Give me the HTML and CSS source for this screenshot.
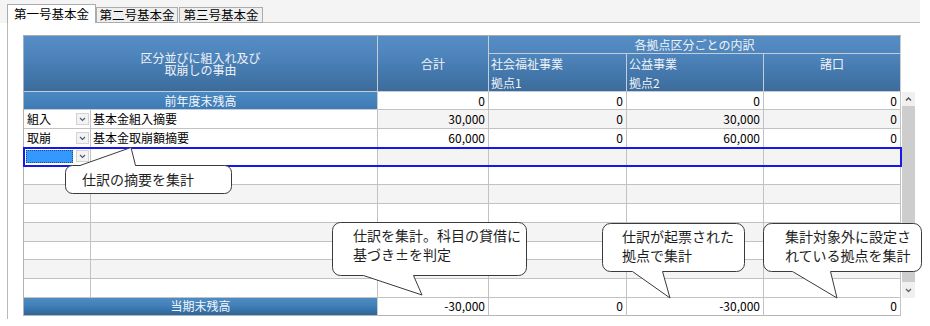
FILE: index.html
```html
<!DOCTYPE html>
<html lang="ja">
<head>
<meta charset="utf-8">
<title>基本金</title>
<link rel="stylesheet" href="styles.css">
</head>
<body>
<div class="app">
  <div class="tabs">
    <div class="tab tab-active">第一号基本金</div>
    <div class="tab tab-2">第二号基本金</div>
    <div class="tab tab-3">第三号基本金</div>
    <div class="tab-fill"></div>
  </div>
  <div class="panel">
    <div class="head">
      <div class="hc h-reason"><span class="hl">区分並びに組入れ及び</span><span class="hl">取崩しの事由</span></div>
      <div class="hc h-total">合計</div>
      <div class="hc h-group">各拠点区分ごとの内訳</div>
      <div class="hc h-sub">社会福祉事業<br>拠点1</div>
      <div class="hc h-sub">公益事業<br>拠点2</div>
      <div class="hc h-sub h-mid">諸口</div>
    </div>
    <div class="body">
      <div class="rows">
        <div class="row row-open">
          <div class="c band band-open">前年度末残高</div>
          <div class="c num">0</div>
          <div class="c num">0</div>
          <div class="c num">0</div>
          <div class="c num">0</div>
        </div>
        <div class="row alt">
          <div class="c lab w">組入<span class="dd"><svg width="11" height="10" viewBox="0 0 11 10"><polyline points="3,4 5.5,6.5 8,4" fill="none" stroke="#4c5c74" stroke-width="1.2"/></svg></span></div>
          <div class="c txt w">基本金組入摘要</div>
          <div class="c num">30,000</div>
          <div class="c num">0</div>
          <div class="c num">30,000</div>
          <div class="c num">0</div>
        </div>
        <div class="row">
          <div class="c lab">取崩<span class="dd"><svg width="11" height="10" viewBox="0 0 11 10"><polyline points="3,4 5.5,6.5 8,4" fill="none" stroke="#4c5c74" stroke-width="1.2"/></svg></span></div>
          <div class="c txt">基本金取崩額摘要</div>
          <div class="c num">60,000</div>
          <div class="c num">0</div>
          <div class="c num">60,000</div>
          <div class="c num">0</div>
        </div>
        <div class="row alt sel">
          <div class="c lab w"><span class="pick"></span><span class="dd"><svg width="11" height="10" viewBox="0 0 11 10"><polyline points="3,4 5.5,6.5 8,4" fill="none" stroke="#4c5c74" stroke-width="1.2"/></svg></span></div>
          <div class="c txt w"></div>
          <div class="c num"></div>
          <div class="c num"></div>
          <div class="c num"></div>
          <div class="c num"></div>
        </div>
        <div class="row"><div class="c"></div><div class="c"></div><div class="c"></div><div class="c"></div><div class="c"></div><div class="c"></div></div>
        <div class="row alt"><div class="c"></div><div class="c"></div><div class="c"></div><div class="c"></div><div class="c"></div><div class="c"></div></div>
        <div class="row"><div class="c"></div><div class="c"></div><div class="c"></div><div class="c"></div><div class="c"></div><div class="c"></div></div>
        <div class="row alt"><div class="c"></div><div class="c"></div><div class="c"></div><div class="c"></div><div class="c"></div><div class="c"></div></div>
        <div class="row"><div class="c"></div><div class="c"></div><div class="c"></div><div class="c"></div><div class="c"></div><div class="c"></div></div>
        <div class="row alt"><div class="c"></div><div class="c"></div><div class="c"></div><div class="c"></div><div class="c"></div><div class="c"></div></div>
        <div class="row"><div class="c"></div><div class="c"></div><div class="c"></div><div class="c"></div><div class="c"></div><div class="c"></div></div>
      </div>
      <div class="scroll">
        <div class="sb-btn"><svg width="13" height="14" viewBox="0 0 13 14"><polyline points="4,8.5 6.5,6 9,8.5" fill="none" stroke="#505050" stroke-width="1.3"/></svg></div>
        <div class="sb-thumb"></div>
        <div class="sb-btn sb-down"><svg width="13" height="16" viewBox="0 0 13 16"><polyline points="4,7 6.5,9.5 9,7" fill="none" stroke="#606060" stroke-width="1.3"/></svg></div>
      </div>
    </div>
    <div class="row row-close">
      <div class="c band band-close">当期末残高</div>
      <div class="c num">-30,000</div>
      <div class="c num">0</div>
      <div class="c num">-30,000</div>
      <div class="c num">0</div>
    </div>
  </div>

  <div class="callouts">
    <svg class="balloons" width="930" height="326" viewBox="0 0 930 326">
      <path d="M 72.5 165.5 L 80 165.5 L 131 147.5 L 135.5 165.5 L 224.5 165.5 A 7 7 0 0 1 231.5 172.5 L 231.5 186.5 A 7 7 0 0 1 224.5 193.5 L 72.5 193.5 A 7 7 0 0 1 65.5 186.5 L 65.5 172.5 A 7 7 0 0 1 72.5 165.5 Z"/>
      <path d="M 340.5 222.5 L 518.5 222.5 A 8 8 0 0 1 526.5 230.5 L 526.5 267.5 A 8 8 0 0 1 518.5 275.5 L 413.5 275.5 L 422 295 L 363.5 275.5 L 340.5 275.5 A 8 8 0 0 1 332.5 267.5 L 332.5 230.5 A 8 8 0 0 1 340.5 222.5 Z"/>
      <path d="M 610.5 223.5 L 736.5 223.5 A 8 8 0 0 1 744.5 231.5 L 744.5 263.5 A 8 8 0 0 1 736.5 271.5 L 662.5 271.5 L 670 298 L 632.5 271.5 L 610.5 271.5 A 8 8 0 0 1 602.5 263.5 L 602.5 231.5 A 8 8 0 0 1 610.5 223.5 Z"/>
      <path d="M 771.5 223.5 L 913.5 223.5 A 8 8 0 0 1 921.5 231.5 L 921.5 263.5 A 8 8 0 0 1 913.5 271.5 L 830.5 271.5 L 837 298 L 792.5 271.5 L 771.5 271.5 A 8 8 0 0 1 763.5 263.5 L 763.5 231.5 A 8 8 0 0 1 771.5 223.5 Z"/>
    </svg>
    <div class="ct ct1">仕訳の摘要を集計</div>
    <div class="ct ct2">仕訳を集計。科目の貸借に<br>基づき±を判定</div>
    <div class="ct ct3">仕訳が起票された<br>拠点で集計</div>
    <div class="ct ct4">集計対象外に設定さ<br>れている拠点を集計</div>
  </div>
</div>
</body>
</html>
```
FILE: styles.css
```css
* { box-sizing: border-box; }

:root {
  --cols: 67px 287px 111px 138px 137px 137px;
}

body {
  margin: 0;
  background: #fff;
  font-family: "Noto Sans CJK JP", "Noto Sans", sans-serif;
  font-size: 12px;
  color: #000;
}

.app {
  position: relative;
  width: 930px;
  height: 326px;
  overflow: hidden;
}

/* tabs */
.tabs {
  display: flex;
  align-items: flex-end;
  width: 920px;
  height: 23px;
  padding-left: 7px;
  background: #f4f4f4;
}
.tab {
  display: flex;
  align-items: center;
  justify-content: center;
  height: 16px;
  border: 1px solid #acacac;
  background: #efefef;
  font-size: 12.5px;
  line-height: 12px;
  white-space: nowrap;
}
.tab-active {
  width: 89px;
  height: 19px;
  border-bottom: none;
  background: #fff;
}
.tab-2 { width: 82px; }
.tab-3 { width: 84px; margin-left: 1px; }
.tab-fill {
  flex: 1;
  height: 1px;
  background: #bcbcbc;
}

/* panel */
.panel {
  margin-left: 7px;
  height: 296px;
  border-left: 1px solid #b9b9b9;
  padding: 12px 0 0 15px;
}

/* header */
.head {
  display: grid;
  grid-template-columns: var(--cols);
  grid-template-rows: 18px 38px;
  width: 878px;
  border-left: 1px solid #9fb0c2;
  border-top: 1px solid #a9a9a9;
  background: linear-gradient(180deg, #568dc4 0%, #4e85bc 32%, #467bb0 58%, #3b6b9b 100%);
  color: #eef3f8;
  font-size: 12px;
}
.hc {
  border-right: 1px solid #c5ccd4;
  border-bottom: 1px solid #c5ccd4;
}
.h-reason {
  grid-column: 1 / 3;
  grid-row: 1 / 3;
  display: flex;
  flex-direction: column;
  align-items: center;
  justify-content: center;
  text-align: center;
}
.hl {
  display: block;
  height: 12px;
  line-height: 12px;
  overflow: visible;
}
.h-total {
  grid-column: 3;
  grid-row: 1 / 3;
  display: flex;
  align-items: center;
  justify-content: center;
}
.h-group {
  grid-column: 4 / 7;
  grid-row: 1;
  display: flex;
  align-items: center;
  justify-content: center;
  line-height: 12px;
}
.h-sub {
  grid-row: 2;
  padding-left: 2px;
  line-height: 19px;
  white-space: nowrap;
}
.h-mid { text-align: center; padding-left: 0; }

/* body */
.body { display: flex; }
.rows {
  width: 878px;
  border-left: 1px solid #b3b3b3;
}
.row {
  display: grid;
  grid-template-columns: var(--cols);
  height: 18.8px;
}
.row-open { height: 18px; }
.row-close {
  width: 878px;
  height: 18px;
  border-left: 1px solid #b3b3b3;
}
.c {
  display: flex;
  align-items: center;
  overflow: hidden;
  white-space: nowrap;
  border-right: 1px solid #c2c2c2;
  border-bottom: 1px solid #c2c2c2;
  background: #fff;
  line-height: 12px;
}
.alt .c { background: #f4f4f4; }
.alt .c.w { background: #fff; }
.num {
  justify-content: flex-end;
  padding-right: 3px;
}
.lab { padding-left: 3px; }
.txt { padding-left: 2px; }

.band {
  grid-column: span 2;
  justify-content: center;
  color: #f2f6fa;
  border-right-color: #c5ccd4;
}
.band-open {
  background: linear-gradient(180deg, #4b89c2 0%, #4482bc 50%, #3e7bb5 100%);
  border-bottom-color: #c5ccd4;
}
.band-close {
  background: linear-gradient(180deg, #4f8cc4 0%, #4280b9 45%, #3670a6 75%, #2f6597 100%);
  border-bottom-color: #b5b5b5;
}
.row-close .num { border-bottom-color: #b5b5b5; }

.dd {
  display: flex;
  align-items: center;
  justify-content: center;
  width: 13px;
  height: 12px;
  margin-left: auto;
  margin-right: 1px;
  border: 1px solid #d3d3d3;
  background: #f3f3f3;
}

.sel {
  outline: 2px solid #1616ee;
  outline-offset: -1px;
}
.pick {
  width: 47px;
  height: 13px;
  margin-left: -1px;
  background: #3399ff;
  border: 1px dotted #2a4a78;
}

/* scrollbar */
.scroll {
  width: 13px;
  margin-left: 1px;
  display: flex;
  flex-direction: column;
}
.sb-btn {
  height: 14px;
  background: #f0f0f0;
  display: flex;
  align-items: center;
  justify-content: center;
}
.sb-btn svg { display: block; }
.sb-down { height: 16px; }
.sb-thumb {
  flex: 1;
  background: #cdcdcd;
}

/* callouts */
.callouts {
  position: absolute;
  left: 0;
  top: 0;
  width: 930px;
  height: 326px;
  pointer-events: none;
}
.balloons {
  position: absolute;
  left: 0;
  top: 0;
}
.balloons path {
  fill: #fff;
  stroke: #3a3a3a;
  stroke-width: 1;
}
.ct {
  position: absolute;
  font-size: 14px;
  line-height: 19px;
  color: #1e1e1e;
  white-space: nowrap;
}
.ct1 { left: 82px; top: 170px; }
.ct2 { left: 353px; top: 226px; }
.ct3 { left: 622px; top: 227px; }
.ct4 { left: 785px; top: 227px; }
```
